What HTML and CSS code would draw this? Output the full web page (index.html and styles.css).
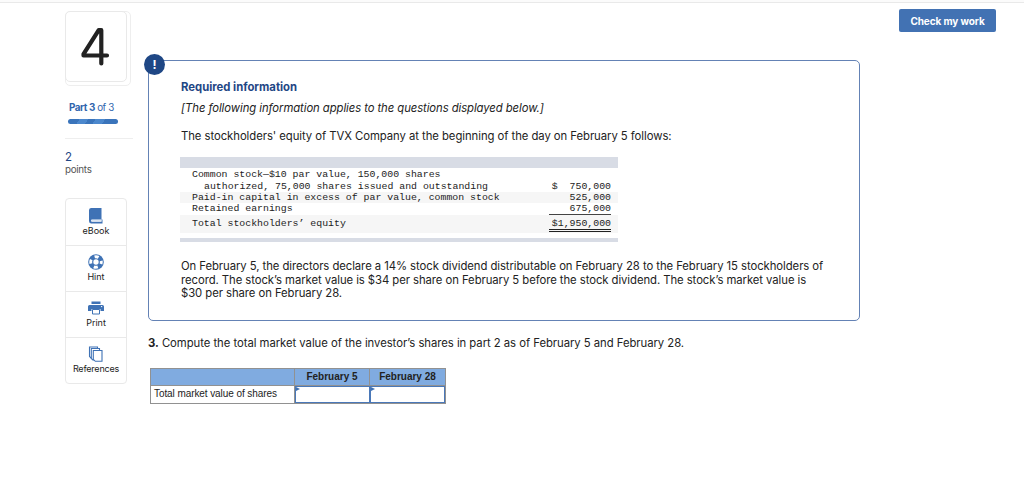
FILE: index.html
```html
<!DOCTYPE html>
<html lang="en">
<head>
<meta charset="utf-8">
<title>Question 4</title>
<link rel="stylesheet" href="styles.css">
</head>
<body>
<div class="topbar"></div>
<div class="page">
  <aside class="side">
    <div class="card-stack"><div class="card"><svg width="30" height="42" viewBox="0 0 30 42" role="img" aria-label="4"><path d="M20.300 36.500V3.200H17.700L2.500 27.200V28.500H26" fill="none" stroke="#222" stroke-width="4.200" stroke-linecap="round" stroke-linejoin="round"/></svg></div></div>
    <div class="part"><b>Part 3</b> of 3</div>
    <div class="progress"></div>
    <div class="points"><span class="num">2</span><span class="unit">points</span></div>
    <nav class="tools">
      <a class="tool"><svg width="16" height="16" viewBox="0 0 16 16"><path d="M3.200 0H13.500V11.500H3.500Q2.600 12.600 3.500 13.700H13.500V11.500H14.500V15.500H3Q1 15.300 1 13V2Q1.200 0 3.200 0Z" fill="#3f72b5"/><path d="M3.500 12.700H13.500" stroke="#d7e2f1" stroke-width="1.200"/></svg><span>eBook</span></a>
      <a class="tool"><svg width="16" height="16" viewBox="0 0 16 16"><circle cx="8" cy="8" r="7.800" fill="#3f72b5"/><circle cx="8" cy="8" r="5.300" fill="none" stroke="#fff" stroke-width="2.900" stroke-dasharray="4.162 4.162" stroke-dashoffset="2.081"/><circle cx="8" cy="8" r="2.700" fill="#fff"/></svg><span>Hint</span></a>
      <a class="tool"><svg width="16" height="16" viewBox="0 0 16 16"><path d="M3.500 1.500H12.500V4H3.500ZM1.500 5H14.500Q16 5 16 6.500V11H12.500V9H3.500V11H0V6.500Q0 5 1.500 5Z" fill="#3f72b5"/><path d="M4.500 9.500H11.500V14H4.500Z" fill="#fff" stroke="#3f72b5"/><path d="M13 6.600H14.200" stroke="#fff"/></svg><span>Print</span></a>
      <a class="tool"><svg width="16" height="16" viewBox="0 0 16 16"><g fill="#fff" stroke="#3f72b5" stroke-width="1.100"><path d="M1.500 1H9.500V12H3L1.500 10.500Z"/><path d="M3.300 2.500H11.500V14H4.800L3.300 12.500Z"/><path d="M5.300 4.500H14V15.300H7.300L5.300 13.300Z"/></g></svg><span class="wide">References</span></a>
    </nav>
  </aside>
  <main class="main">
    <section class="panel">
      <span class="alert">!</span>
      <h2 class="title">Required information</h2>
      <p class="note"><i>[The following information applies to the questions displayed below.]</i></p>
      <p class="lead">The stockholders' equity of TVX Company at the beginning of the day on February 5 follows:</p>
      <div class="ledger">
        <div class="band"></div>
        <div class="row first"><span>Common stock—$10 par value, 150,000 shares</span></div>
        <div class="row"><span class="indent">authorized, 75,000 shares issued and outstanding</span><span class="amt">$&nbsp; 750,000</span></div>
        <div class="row alt"><span>Paid-in capital in excess of par value, common stock</span><span class="amt">525,000</span></div>
        <div class="row last"><span>Retained earnings</span><span class="amt">675,000</span></div>
        <div class="row alt total"><span>Total stockholders’ equity</span><span class="amt">$1,950,000</span></div>
        <div class="foot"></div>
      </div>
      <div class="para">
        <p>On February 5, the directors declare a 14% stock dividend distributable on February 28 to the February 15 stockholders of</p>
        <p>record. The stock’s market value is $34 per share on February 5 before the stock dividend. The stock’s market value is</p>
        <p>$30 per share on February 28.</p>
      </div>
    </section>
    <p class="question"><b>3.</b> Compute the total market value of the investor’s shares in part 2 as of February 5 and February 28.</p>
    <div class="answers">
      <div class="head"></div><div class="head">February 5</div><div class="head">February 28</div>
      <div class="label">Total market value of shares</div><div class="entry"></div><div class="entry"></div>
    </div>
  </main>
  <button class="check">Check my work</button>
</div>
</body>
</html>
```
FILE: styles.css
```css
* { box-sizing: border-box; }
body { margin: 0; background: #fff; color: #222; font: 11.3px/14px Inter, "Liberation Sans", sans-serif; overflow: hidden; }
p, h2 { margin: 0; white-space: nowrap; }
.topbar { height: 3px; background: #fbfbfb; border-bottom: 1px solid #e9e9e9; }
.page { display: grid; grid-template-columns: 83px 712px 97px; padding-left: 65px; }
.page > .check { margin-left: 39px; }
.side { padding-top: 8px; }
.card-stack { width: 66px; height: 75px; border: 1px solid #eee; border-radius: 5px; }
.card { width: 62px; height: 71px; margin: -1px 0 0 -1px; background: #fff; border: 1px solid #e9e9e9; border-radius: 5px; display: flex; justify-content: center; padding-top: 15px; }
.part { margin: 15px 0 0 4px; font-size: 9.8px; line-height: 14px; letter-spacing: -.42px; color: #2f65ad; white-space: nowrap; }
.progress { width: 50px; height: 5px; margin: 4px 0 0 3px; border-radius: 3px; background: linear-gradient(125deg, #3a74bb 22%, #4c88cd 22% 38%, #3a74bb 38% 52%, #4c88cd 52% 70%, #3a74bb 70%); }
.points { width: 68px; margin-top: 14px; padding-top: 12px; border-top: 1px solid #eee; display: flex; flex-direction: column; }
.num { color: #1f4785; font-size: 11.5px; line-height: 13px; }
.unit { color: #555; font-size: 9.8px; line-height: 11px; letter-spacing: -.3px; }
.tools { width: 62px; height: 186px; margin-top: 23px; border: 1px solid #e9e9e9; border-radius: 4px; }
.tool { height: 46px; display: flex; flex-direction: column; align-items: center; padding-top: 9px; font-size: 9px; line-height: 11px; color: #222; }
.tool + .tool { border-top: 1px solid #e9e9e9; padding-top: 8px; }
.tool:first-child svg { margin-bottom: 1px; }
.tool svg { margin-bottom: 1px; }
.wide { letter-spacing: -.2px; }
.main { padding-top: 57px; }
.panel { position: relative; height: 261px; border: 1px solid #6482b5; border-radius: 5px; padding: 19px 0 0 32px; }
.alert { position: absolute; left: -5px; top: -7px; width: 21px; height: 21px; border-radius: 50%; background: #1f4785; color: #fff; font-weight: 700; font-size: 12px; line-height: 21px; text-align: center; }
.title { font-size: 11.3px; line-height: 14px; color: #1f4785; }
.note { margin-top: 7px; letter-spacing: -.07px; }
.lead { margin-top: 14px; letter-spacing: -.05px; }
.ledger { width: 438px; margin-left: -1px; margin-top: 14px; font: 9.87px/11px "Liberation Mono", monospace; }
.band { height: 11px; background: #d8dce5; }
.row { height: 11px; padding: 0 7px 0 12px; display: flex; justify-content: space-between; white-space: pre; }
.first { height: 12px; line-height: 12px; margin-top: 1px; }
.row.first + .row { line-height: 11px; height: 11px; }
.alt { background: #f6f6f6; }
.indent { padding-left: 12px; }
.last { height: 12px; line-height: 12px; }
.amt { width: 62px; text-align: right; }
.last .amt { border-bottom: 1px solid #444; height: 12px; }
.total { height: 18px; line-height: 18px; }
.total .amt { height: 17px; line-height: 17px; border-bottom: 3px double #222; }
.foot { height: 4px; margin-top: 5px; background: #d8dce5; }
.para { margin-top: 18px; line-height: 13.7px; letter-spacing: -.059px; }
.question { margin-top: 15px; letter-spacing: -.04px; }
.answers { width: 296px; margin: 18px 0 0 2px; display: grid; grid-template-columns: 144px 75px 75px; grid-template-rows: 17px 17px; border: 1px solid #919191; font: 10px/16px "Liberation Sans", sans-serif; }
.head { background: #80abe0; border-right: 1px solid #919191; border-bottom: 1px solid #919191; font-weight: 700; text-align: center; }
.head:nth-child(3) { border-right: 0; }
.label { padding-left: 3px; letter-spacing: -.08px; white-space: nowrap; border-right: 1px solid #919191; }
.entry { border: 1px solid #4a78b8; border-width: 1px 1.5px 1px 1px; }
.entry::before { content: ""; display: block; width: 0; border-left: 4px solid #3f72b5; border-top: 2.5px solid transparent; border-bottom: 2.5px solid transparent; }
.check { width: 97px; height: 23px; margin-top: 6px; padding: 0; border: 0; border-radius: 2px; background: #4272b3; color: #fff; font: 700 10px/22px Inter, sans-serif; letter-spacing: -.1px; white-space: nowrap; }
```
